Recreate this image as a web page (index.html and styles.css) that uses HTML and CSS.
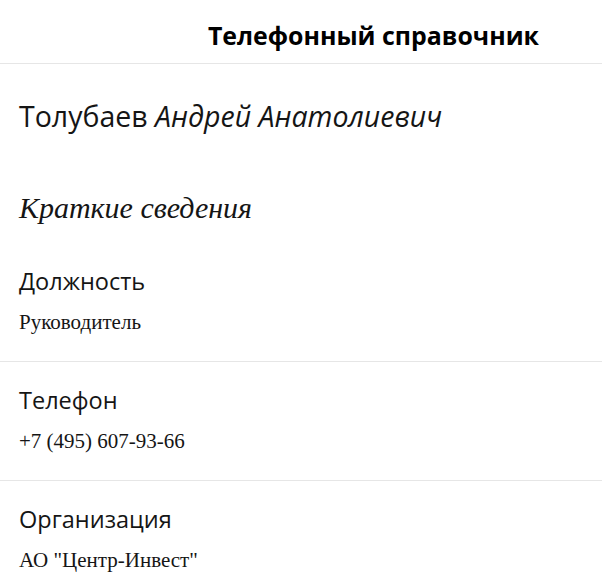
FILE: index.html
```html
<!DOCTYPE html>
<html lang="ru">
<head>
<meta charset="utf-8">
<link rel="stylesheet" href="styles.css">
</head>
<body>
<header class="topbar">
  <h1 class="topbar-title">Телефонный справочник</h1>
</header>
<main class="content">
  <h2 class="person">Толубаев <em>Андрей Анатолиевич</em></h2>
  <h3 class="summary">Краткие сведения</h3>
  <section class="field">
    <div class="field-label">Должность</div>
    <div class="field-value">Руководитель</div>
  </section>
  <section class="field">
    <div class="field-label">Телефон</div>
    <div class="field-value">+7 (495) 607-93-66</div>
  </section>
  <section class="field field-last">
    <div class="field-label">Организация</div>
    <div class="field-value">АО "Центр-Инвест"</div>
  </section>
</main>
</body>
</html>
```
FILE: styles.css
```css
html, body { margin: 0; padding: 0; background: #fff; color: #151515; }
body { font-family: "Open Sans", "Noto Sans", sans-serif; }
.topbar {
  height: 63px;
  border-bottom: 1px solid #e6e6e6;
  display: flex;
  align-items: center;
  justify-content: flex-end;
  padding-right: 63px;
}
.topbar-title {
  margin: 0;
  font-size: 24.9px;
  font-weight: 700;
  color: #000;
  padding-top: 6px;
}
.content { padding: 0 0 0 19px; }
.person {
  margin: 0;
  padding-top: 34px;
  font-size: 28.5px;
  font-weight: 400;
  line-height: 36px;
}
.person em { font-style: italic; }
.summary {
  margin: 0 0 17px;
  padding-top: 56px;
  font-family: "Liberation Serif", serif;
  font-style: italic;
  font-weight: 400;
  font-size: 30px;
  line-height: 36px;
}
.field {
  border-bottom: 1px solid #e6e6e6;
  margin-left: -19px;
  padding: 0 0 0 19px;
  height: 119px;
  box-sizing: border-box;
}
.field-label {
  padding-top: 23px;
  font-size: 23.5px;
  line-height: 30px;
}
.field-value {
  padding-top: 14px;
  font-family: "Liberation Serif", serif;
  font-size: 21px;
  line-height: 24px;
}
.field-last { border-bottom: none; }
```
